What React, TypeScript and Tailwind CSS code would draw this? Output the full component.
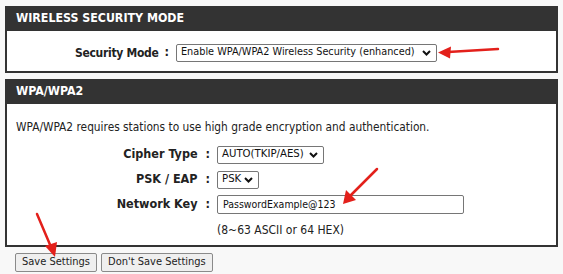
import { ReactNode } from "react";

const font = { fontFamily: '"DejaVu Sans Condensed", "Liberation Sans", sans-serif' };

function Chevron() {
  return (
    <svg width="9" height="6" viewBox="0 0 9 6" className="shrink-0">
      <path d="M1 1 L4.5 4.5 L8 1" fill="none" stroke="#111" strokeWidth="2" />
    </svg>
  );
}

function Select({ value, width, size }: { value: string; width: string; size: string }) {
  return (
    <div
      className={`flex items-center justify-between h-[18px] border border-[#767676] rounded-[2px] bg-white pl-[4px] pr-[5px] text-[#111] ${size} ${width}`}
    >
      <span className="whitespace-nowrap">{value}</span>
      <Chevron />
    </div>
  );
}

function Panel({ title, children, body }: { title: string; children: ReactNode; body: string }) {
  return (
    <div className="w-[553px]">
      <div className="h-[25px] bg-[#333333] flex items-center px-[11px] text-white text-[12.3px] font-bold">
        {title}
      </div>
      <div className={`bg-white border-2 border-t-0 border-[#333333] ${body}`}>{children}</div>
    </div>
  );
}

function Row({ label, children }: { label: string; children: ReactNode }) {
  return (
    <div className="flex items-center h-[25px]">
      <div className="w-[203px] text-right text-[12.5px] font-bold text-[#222] whitespace-nowrap">
        {label} <span className="ml-[4px]">:</span>
      </div>
      <div className="ml-[7px]">{children}</div>
    </div>
  );
}

export default function App() {
  return (
    <div className="relative w-[563px] h-[274px] bg-[#f8f8f8] pt-[6px] px-[5px] text-[#222]" style={font}>
      <Panel title="WIRELESS SECURITY MODE" body="h-[42px] flex items-center pt-[3px]">
        <div className="flex items-center pl-[68px]">
          <span className="text-[12px] font-bold tracking-[-0.3px] whitespace-nowrap">Security Mode</span>
          <span className="text-[12.5px] font-bold ml-[6px]">:</span>
          <div className="ml-[7px]">
            <Select
              value="Enable WPA/WPA2 Wireless Security (enhanced)"
              width="w-[261px]"
              size="text-[10.8px]"
            />
          </div>
        </div>
      </Panel>

      <div className="mt-[6px]">
        <Panel title="WPA/WPA2" body="h-[143px] pt-[15px]">
          <p className="pl-[9px] text-[11.8px] leading-[16px] text-[#222]">
            WPA/WPA2 requires stations to use high grade encryption and authentication.
          </p>
          <div className="mt-[7px]">
            <Row label="Cipher Type">
              <Select value="AUTO(TKIP/AES)" width="w-[107px]" size="text-[11.3px]" />
            </Row>
            <Row label="PSK / EAP">
              <Select value="PSK" width="w-[42px]" size="text-[11.3px]" />
            </Row>
            <Row label="Network Key">
              <div className="w-[247px] h-[19px] border border-[#767676] rounded-[2px] bg-white flex items-center pl-[5px] text-[10.5px] text-[#111]">
                PasswordExample@123
              </div>
            </Row>
            <div className="h-[25px] flex items-center pl-[210px] text-[12px]">(8~63 ASCII or 64 HEX)</div>
          </div>
        </Panel>
      </div>

      <div className="flex gap-[4px] mt-[6px] pl-[10px]">
        <button className="h-[19px] px-[6px] border border-[#8a8a8a] rounded-[2px] bg-[#efefef] text-[11px] text-[#222]">
          Save Settings
        </button>
        <button className="h-[19px] px-[6px] border border-[#8a8a8a] rounded-[2px] bg-[#efefef] text-[11px] text-[#222]">
          Don't Save Settings
        </button>
      </div>

      <svg className="absolute inset-0 pointer-events-none" width="563" height="274" viewBox="0 0 563 274">
        <g stroke="#e3201b" strokeWidth="2.5" strokeLinecap="round" fill="#e3201b">
          <line x1="498" y1="49" x2="448" y2="52" />
          <path d="M438 52.6 L451 46.5 L450 58.5 Z" stroke="none" />
          <line x1="377" y1="169" x2="350" y2="196" />
          <path d="M343 204 L346 190 L356 200 Z" stroke="none" />
          <line x1="37" y1="214" x2="51" y2="247" />
          <path d="M55 257 L45 246 L57 242 Z" stroke="none" />
        </g>
      </svg>
    </div>
  );
}
